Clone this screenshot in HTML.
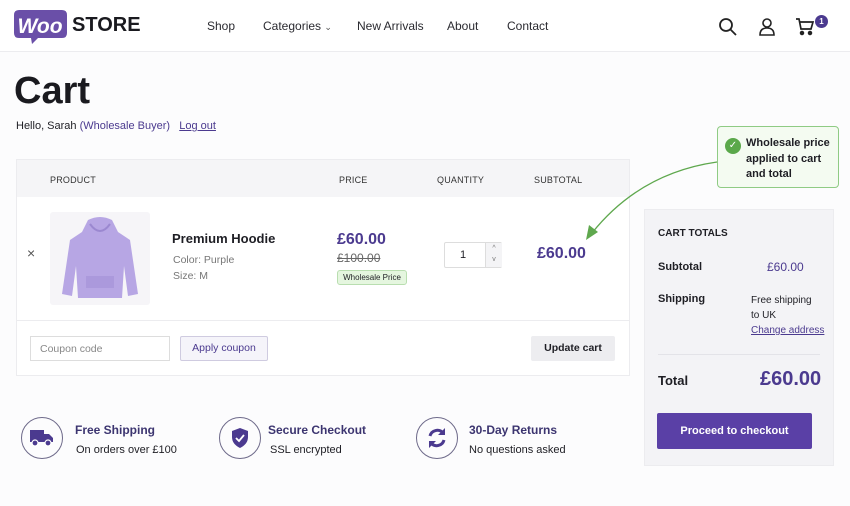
<!DOCTYPE html>
<html><head><meta charset="utf-8"><style>
*{box-sizing:border-box;margin:0;padding:0}
body{width:850px;height:506px;background:#fcfcfd;font-family:"Liberation Sans",sans-serif;color:#1e1e24;position:relative;overflow:hidden}
.a{position:absolute;white-space:nowrap}
.p{color:#4b3a8f}
.nav{font-size:12px;color:#2a2a30;top:19px}
.th{font-size:9px;color:#333;top:175px;letter-spacing:.2px}
.g{color:#777}
</style></head><body>
<div class="a" style="left:0;top:0;width:850px;height:52px;background:#fff;border-bottom:1px solid #ececef"></div>
<svg class="a" style="left:14px;top:10px" width="54" height="36"><path d="M5 0H48Q53 0 53 5V23Q53 28 48 28H24L18 34L17 28H5Q0 28 0 23V5Q0 0 5 0Z" fill="#6a4fa8"/><text x="26" y="23" text-anchor="middle" font-family="Liberation Sans" font-weight="bold" font-style="italic" font-size="21" fill="#fff">Woo</text></svg>
<div class="a" style="left:72px;top:14px;font-size:20px;font-weight:bold;color:#1a1a1f">STORE</div>
<div class="a nav" style="left:207px">Shop</div>
<div class="a nav" style="left:263px">Categories <span style="font-size:9px;color:#555">&#8964;</span></div>
<div class="a nav" style="left:357px">New Arrivals</div>
<div class="a nav" style="left:447px">About</div>
<div class="a nav" style="left:507px">Contact</div>
<svg class="a" style="left:718px;top:17px" width="20" height="20" fill="none" stroke="#222" stroke-width="1.8"><circle cx="8" cy="8" r="6"/><path d="M12.5 12.5L18 18"/></svg>
<svg class="a" style="left:758px;top:17px" width="18" height="20" fill="none" stroke="#222" stroke-width="1.6"><circle cx="9" cy="6" r="4"/><path d="M2 18Q2 11 9 11Q16 11 16 18Z"/></svg>
<svg class="a" style="left:795px;top:17px" width="20" height="20" fill="none" stroke="#222" stroke-width="1.7"><path d="M1 2H4L6 12H16L18 5H5"/><circle cx="7" cy="16" r="1.4" fill="#222"/><circle cx="15" cy="16" r="1.4" fill="#222"/></svg>
<div class="a" style="left:815px;top:15px;width:13px;height:13px;border-radius:50%;background:#4b3a8f;color:#fff;font-size:8px;font-weight:bold;text-align:center;line-height:13px">1</div>

<div class="a" style="left:14px;top:70px;font-size:38px;font-weight:bold;color:#1a1a1f">Cart</div>
<div class="a" style="left:16px;top:120px;font-size:11px">Hello, Sarah <span class="p">(Wholesale Buyer)</span> &nbsp; <span class="p" style="text-decoration:underline">Log out</span></div>

<div class="a" style="left:16px;top:159px;width:614px;height:217px;background:#fff;border:1px solid #ececef"></div>
<div class="a" style="left:17px;top:160px;width:612px;height:37px;background:#f5f5f7"></div>
<div class="a th" style="left:50px">PRODUCT</div>
<div class="a th" style="left:339px">PRICE</div>
<div class="a th" style="left:437px">QUANTITY</div>
<div class="a th" style="left:534px">SUBTOTAL</div>
<div class="a" style="left:27px;top:245px;font-size:14px;color:#555">×</div>
<div class="a" style="left:50px;top:212px;width:100px;height:93px;background:#f6f5f8;border-radius:3px"></div>
<svg class="a" style="left:58px;top:216px" width="84" height="88"><path d="M30 4Q42 -2 54 4L60 16L72 24L80 78L70 80L66 50L64 82H20L18 50L14 80L4 78L12 24L24 16Z" fill="#b7a6e4"/><path d="M32 8Q42 22 52 8" fill="none" stroke="#9b88d0" stroke-width="2"/><path d="M28 60H56V72H28Z" fill="#ab99dc"/></svg>
<div class="a" style="left:172px;top:231px;font-size:13px;font-weight:bold">Premium Hoodie</div>
<div class="a g" style="left:173px;top:254px;font-size:10.5px">Color: Purple</div>
<div class="a g" style="left:173px;top:270px;font-size:10.5px">Size: M</div>
<div class="a p" style="left:337px;top:231px;font-size:16px;font-weight:bold">£60.00</div>
<div class="a" style="left:337px;top:251px;font-size:12px;color:#666;text-decoration:line-through">£100.00</div>
<div class="a" style="left:337px;top:270px;width:70px;height:15px;background:#e5f6df;border:1px solid #b9deb0;border-radius:3px;font-size:8px;text-align:center;line-height:13px">Wholesale Price</div>
<div class="a" style="left:444px;top:242px;width:58px;height:26px;border:1px solid #ddd;background:#fff;border-radius:2px"><span style="position:absolute;left:15px;top:6px;font-size:11px">1</span><span style="position:absolute;left:40px;top:0;width:17px;height:24px;background:#f4f4f6;border-left:1px solid #ddd;font-size:7px;color:#777;text-align:center;line-height:11px">^<br>v</span></div>
<div class="a p" style="left:537px;top:245px;font-size:16px;font-weight:bold">£60.00</div>
<div class="a" style="left:17px;top:320px;width:612px;border-top:1px solid #ececef"></div>
<div class="a" style="left:30px;top:336px;width:140px;height:25px;border:1px solid #ddd;background:#fff;font-size:10.5px;color:#888;padding:6px 9px">Coupon code</div>
<div class="a p" style="left:180px;top:336px;width:88px;height:25px;border:1px solid #cfcbe0;background:#f5f4fa;border-radius:2px;font-size:10.5px;text-align:center;line-height:23px">Apply coupon</div>
<div class="a" style="left:531px;top:336px;width:84px;height:25px;background:#ededf0;border-radius:2px;font-size:10.5px;font-weight:bold;text-align:center;line-height:25px">Update cart</div>

<div class="a" style="left:717px;top:126px;width:122px;height:62px;border:1px solid #8fcb84;background:#f4fbf1;border-radius:4px"></div>
<div class="a" style="left:725px;top:138px;width:16px;height:16px;border-radius:50%;background:#5aa84a;color:#fff;font-size:10px;text-align:center;line-height:16px">✓</div>
<div class="a" style="left:746px;top:136px;font-size:11px;font-weight:bold;line-height:15.5px;white-space:normal;width:90px">Wholesale price applied to cart and total</div>
<svg class="a" style="left:580px;top:155px" width="140" height="90"><path d="M137 7Q60 18 12 78" fill="none" stroke="#5fa84e" stroke-width="1.3"/><path d="M6 85L9 70L18 77Z" fill="#5fa84e"/></svg>

<div class="a" style="left:644px;top:209px;width:190px;height:257px;background:#f3f3f6;border:1px solid #ececef"></div>
<div class="a" style="left:658px;top:228px;font-size:10px;font-weight:bold">CART TOTALS</div>
<div class="a" style="left:658px;top:261px;font-size:11px;font-weight:bold">Subtotal</div>
<div class="a p" style="left:767px;top:260px;font-size:12px">£60.00</div>
<div class="a" style="left:658px;top:293px;font-size:11px;font-weight:bold">Shipping</div>
<div class="a" style="left:751px;top:293px;font-size:10px;line-height:15px">Free shipping<br>to UK</div>
<div class="a p" style="left:751px;top:325px;font-size:10px;text-decoration:underline">Change address</div>
<div class="a" style="left:658px;top:354px;width:162px;border-top:1px solid #e3e3e8"></div>
<div class="a" style="left:658px;top:373px;font-size:13px;font-weight:bold">Total</div>
<div class="a p" style="left:760px;top:368px;font-size:20px;font-weight:bold">£60.00</div>
<div class="a" style="left:657px;top:413px;width:155px;height:36px;background:#5a40a6;border-radius:2px;color:#fff;font-size:11px;font-weight:bold;text-align:center;line-height:36px">Proceed to checkout</div>

<div class="a" style="left:21px;top:417px;width:42px;height:42px;border:1px solid #6e6a8a;border-radius:50%"></div>
<svg class="a" style="left:29px;top:428px" width="26" height="20"><path d="M1 2H15V14H1Z M15 6H20L24 10V14H15Z" fill="#4b3a8f"/><circle cx="6" cy="15" r="3" fill="#4b3a8f" stroke="#fff" stroke-width="1.2"/><circle cx="19" cy="15" r="3" fill="#4b3a8f" stroke="#fff" stroke-width="1.2"/></svg>
<div class="a" style="left:75px;top:423px;font-size:12px;font-weight:bold;color:#3c3570">Free Shipping</div>
<div class="a" style="left:76px;top:444px;font-size:11px">On orders over £100</div>
<div class="a" style="left:219px;top:417px;width:42px;height:42px;border:1px solid #6e6a8a;border-radius:50%"></div>
<svg class="a" style="left:230px;top:427px" width="20" height="22"><path d="M10 1L18 4V10Q18 17 10 21Q2 17 2 10V4Z" fill="#4b3a8f"/><path d="M6 11L9 14L14 8" fill="none" stroke="#fff" stroke-width="1.8"/></svg>
<div class="a" style="left:268px;top:423px;font-size:12px;font-weight:bold;color:#3c3570">Secure Checkout</div>
<div class="a" style="left:270px;top:444px;font-size:11px">SSL encrypted</div>
<div class="a" style="left:416px;top:417px;width:42px;height:42px;border:1px solid #6e6a8a;border-radius:50%"></div>
<svg class="a" style="left:426px;top:427px" width="22" height="22" fill="none" stroke="#4b3a8f" stroke-width="3"><path d="M4 9A7.5 7.5 0 0 1 17 6"/><path d="M18 13A7.5 7.5 0 0 1 5 16"/><path d="M19 1V8H12Z M3 21V14H10Z" fill="#4b3a8f" stroke="none"/></svg>
<div class="a" style="left:469px;top:423px;font-size:12px;font-weight:bold;color:#3c3570">30-Day Returns</div>
<div class="a" style="left:469px;top:444px;font-size:11px">No questions asked</div>
</body></html>
